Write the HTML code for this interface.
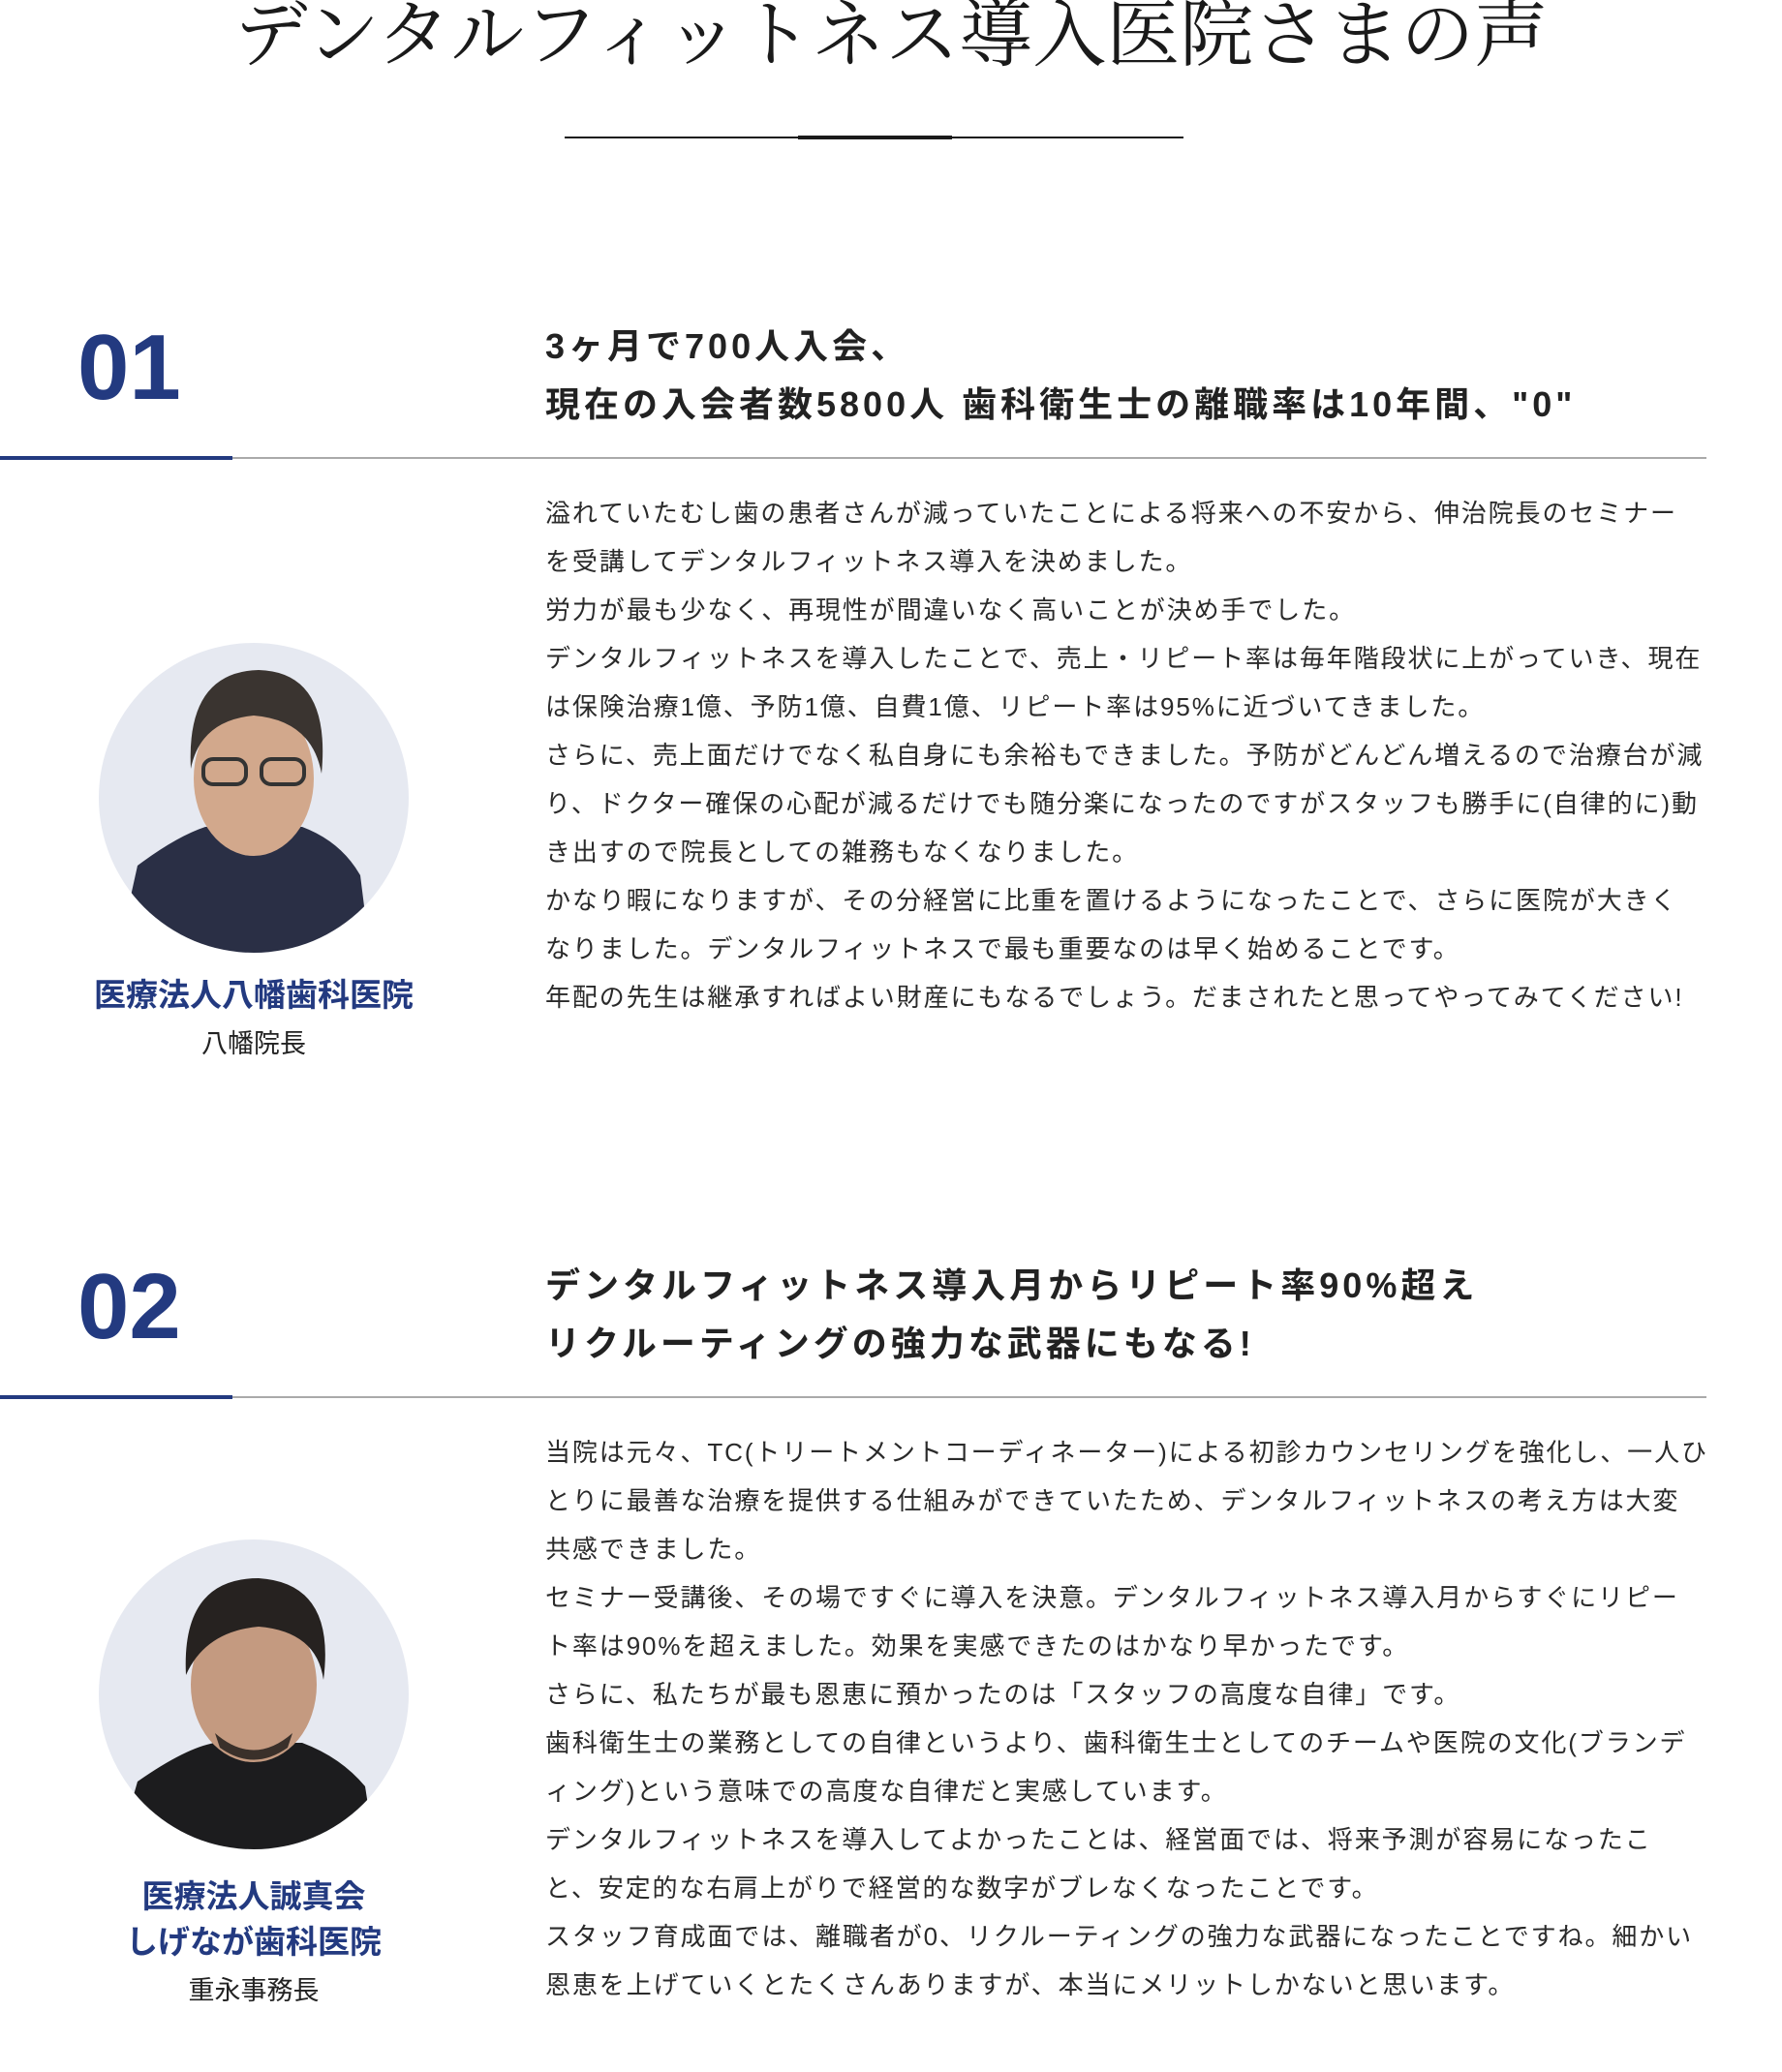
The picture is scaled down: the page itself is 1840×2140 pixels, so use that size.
<!DOCTYPE html>
<html><head><meta charset="utf-8"><style>
body{margin:0;width:1840px;height:2140px;background:#fff;position:relative;overflow:hidden;font-family:"Liberation Sans","Noto Sans CJK JP",sans-serif;color:#222}
.abs{position:absolute;white-space:nowrap}
.title{left:0;width:1840px;text-align:center;top:-6px;font-family:"Liberation Serif","Noto Serif CJK SC",serif;font-size:76px;line-height:86px;letter-spacing:0px;color:#1a1a1a;box-sizing:border-box}
.num{font-size:96px;font-weight:bold;color:#233a80;line-height:100px;left:80px}
.head{left:563px;font-size:36px;font-weight:bold;line-height:60px;letter-spacing:4px}
.body{left:563px;font-size:26px;line-height:50px;letter-spacing:1.9px;color:#2a2a2a}
.name{width:524px;left:0;text-align:center;font-size:33px;font-weight:bold;color:#233a80;line-height:47px}
.role{width:524px;left:0;text-align:center;font-size:27px;color:#222}
</style></head><body>
<div class="abs title">デンタルフィットネス導入医院さまの声</div>
<div class="abs" style="left:583px;top:141px;width:639px;height:2px;background:#1a1a1a"></div>
<div class="abs" style="left:824px;top:140px;width:159px;height:4px;background:#1a1a1a"></div>

<div class="abs num" style="top:330px">01</div>
<div class="abs head" style="top:328px">3ヶ月で700人入会、<br>現在の入会者数5800人 歯科衛生士の離職率は10年間、"0"</div>
<div class="abs" style="left:0;top:472px;width:1762px;height:2px;background:#aaa"></div>
<div class="abs" style="left:0;top:471px;width:240px;height:4px;background:#233a80"></div>
<div class="abs body" style="top:505px">溢れていたむし歯の患者さんが減っていたことによる将来への不安から、伸治院長のセミナー<br>を受講してデンタルフィットネス導入を決めました。<br>労力が最も少なく、再現性が間違いなく高いことが決め手でした。<br>デンタルフィットネスを導入したことで、売上・リピート率は毎年階段状に上がっていき、現在<br>は保険治療1億、予防1億、自費1億、リピート率は95%に近づいてきました。<br>さらに、売上面だけでなく私自身にも余裕もできました。予防がどんどん増えるので治療台が減<br>り、ドクター確保の心配が減るだけでも随分楽になったのですがスタッフも勝手に(自律的に)動<br>き出すので院長としての雑務もなくなりました。<br>かなり暇になりますが、その分経営に比重を置けるようになったことで、さらに医院が大きく<br>なりました。デンタルフィットネスで最も重要なのは早く始めることです。<br>年配の先生は継承すればよい財産にもなるでしょう。だまされたと思ってやってみてください!</div>
<svg class="abs" style="left:102px;top:664px" width="320" height="320" viewBox="0 0 320 320">
<defs><clipPath id="c1"><circle cx="160" cy="160" r="160"/></clipPath></defs>
<g clip-path="url(#c1)"><rect width="320" height="320" fill="#e6e9f1"/>
<path d="M20 320 L40 230 Q80 200 110 190 L210 190 Q250 205 270 240 L280 320Z" fill="#2a2f45"/>
<ellipse cx="160" cy="140" rx="62" ry="80" fill="#d2a88c"/>
<path d="M95 130 Q90 30 165 28 Q240 30 230 135 Q220 80 160 75 Q105 80 95 130Z" fill="#3a3430"/>
<rect x="108" y="120" width="44" height="26" rx="10" fill="none" stroke="#333" stroke-width="4"/>
<rect x="168" y="120" width="44" height="26" rx="10" fill="none" stroke="#333" stroke-width="4"/>
</g></svg>
<div class="abs name" style="top:1004px">医療法人八幡歯科医院</div>
<div class="abs role" style="top:1056px">八幡院長</div>

<div class="abs num" style="top:1300px">02</div>
<div class="abs head" style="top:1298px">デンタルフィットネス導入月からリピート率90%超え<br>リクルーティングの強力な武器にもなる!</div>
<div class="abs" style="left:0;top:1442px;width:1762px;height:2px;background:#aaa"></div>
<div class="abs" style="left:0;top:1441px;width:240px;height:4px;background:#233a80"></div>
<div class="abs body" style="top:1475px">当院は元々、TC(トリートメントコーディネーター)による初診カウンセリングを強化し、一人ひ<br>とりに最善な治療を提供する仕組みができていたため、デンタルフィットネスの考え方は大変<br>共感できました。<br>セミナー受講後、その場ですぐに導入を決意。デンタルフィットネス導入月からすぐにリピー<br>ト率は90%を超えました。効果を実感できたのはかなり早かったです。<br>さらに、私たちが最も恩恵に預かったのは「スタッフの高度な自律」です。<br>歯科衛生士の業務としての自律というより、歯科衛生士としてのチームや医院の文化(ブランデ<br>ィング)という意味での高度な自律だと実感しています。<br>デンタルフィットネスを導入してよかったことは、経営面では、将来予測が容易になったこ<br>と、安定的な右肩上がりで経営的な数字がブレなくなったことです。<br>スタッフ育成面では、離職者が0、リクルーティングの強力な武器になったことですね。細かい<br>恩恵を上げていくとたくさんありますが、本当にメリットしかないと思います。</div>
<svg class="abs" style="left:102px;top:1590px" width="320" height="320" viewBox="0 0 320 320">
<defs><clipPath id="c2"><circle cx="160" cy="160" r="160"/></clipPath></defs>
<g clip-path="url(#c2)"><rect width="320" height="320" fill="#e6e9f1"/>
<path d="M20 320 L40 250 Q90 215 120 210 L210 210 Q250 225 275 255 L285 320Z" fill="#1c1c1e"/>
<ellipse cx="160" cy="150" rx="65" ry="80" fill="#c49a80"/>
<path d="M90 140 Q85 40 165 40 Q245 45 232 145 Q225 95 165 90 Q110 95 90 140Z" fill="#262220"/>
<path d="M120 200 Q160 235 200 200 L195 215 Q160 240 125 215Z" fill="#3a302a"/>
</g></svg>
<div class="abs name" style="top:1935px">医療法人誠真会<br>しげなが歯科医院</div>
<div class="abs role" style="top:2034px">重永事務長</div>
</body></html>
